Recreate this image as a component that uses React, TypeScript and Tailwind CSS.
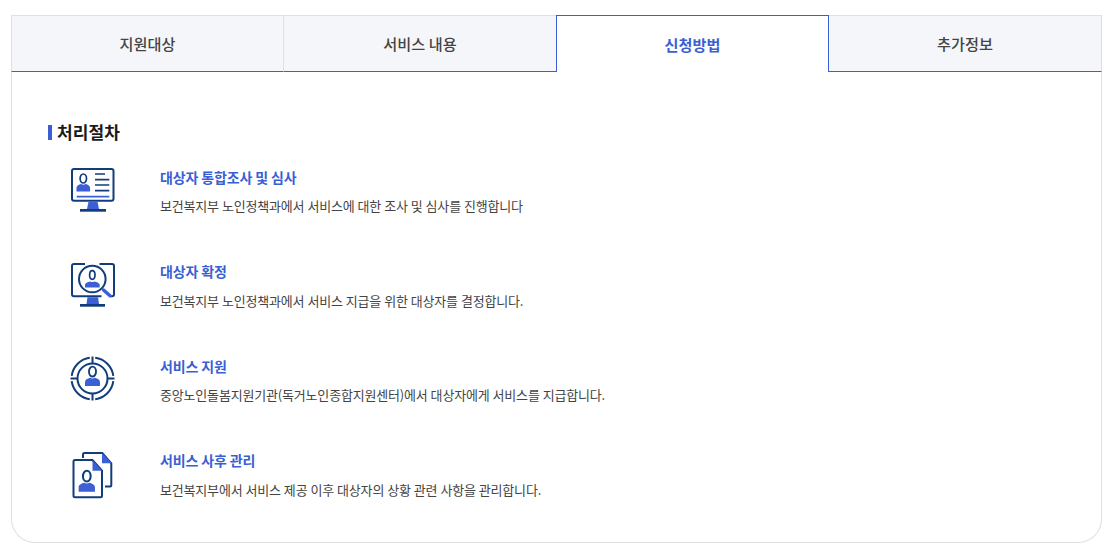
const navy = "#123d7c";
const blue = "#3c5fd6";

function Person({ cx, cy, s = 1 }: { cx: number; cy: number; s?: number }) {
  return (
    <g transform={`translate(${cx} ${cy}) scale(${s})`}>
      <ellipse cx="0" cy="-4" rx="3.2" ry="4.5" fill="none" stroke={navy} strokeWidth="1.7" />
      <path d="M-6.8 9V5.500c0-2.200 2-3.300 4.600-4 1.300.9 3.100.9 4.400 0 2.600.7 4.600 1.800 4.600 4V9z" fill={blue} />
    </g>
  );
}

function Monitor() {
  return (
    <svg width="46" height="48" viewBox="0 0 46 48" fill="none">
      <rect x="2" y="2" width="41.500" height="31.700" rx="2" stroke={navy} strokeWidth="2" />
      <Person cx={13.3} cy={15.5} />
      <path d="M25 7h10M25 12.700h14.300M25 18h14.300M25 23.700h14.300" stroke={navy} strokeWidth="1.700" />
      <path d="M6.700 29.700h32.600" stroke={blue} strokeWidth="1.800" />
      <path d="M18.500 34.700h9l1.500 7.300h-12z" fill={blue} />
      <path d="M10 42h26v2.700H10z" fill={navy} />
    </svg>
  );
}

function SearchMonitor() {
  return (
    <svg width="46" height="48" viewBox="0 0 46 48" fill="none">
      <path d="M15 2H4a2 2 0 0 0-2 2v28.300a2 2 0 0 0 2 2h27.500M29.500 2H42a2 2 0 0 1 2 2v28.300a2 2 0 0 1-2 2h-2" stroke={navy} strokeWidth="2" />
      <circle cx="22.300" cy="17" r="13.300" fill="#fff" stroke={navy} strokeWidth="2" />
      <ellipse cx="22.300" cy="13" rx="2.700" ry="4.300" stroke={navy} strokeWidth="1.700" />
      <path d="M15 25.500v-2.500c0-1.900 2.800-3 5.300-3.500 1.200.8 2.800.8 4 0 2.500.5 5.400 1.600 5.400 3.500v2.500z" fill={blue} />
      <path d="M33.500 28l6.500 5.700" stroke={blue} strokeWidth="3.500" strokeLinecap="round" />
      <path d="M17.500 35.300h10.500l1 6.700H16.500z" fill={blue} />
      <path d="M10 42h25v2.700H10z" fill={navy} />
    </svg>
  );
}

function Target() {
  return (
    <svg width="46" height="48" viewBox="0 0 46 48" fill="none">
      <circle cx="22.500" cy="22.500" r="15" stroke={navy} strokeWidth="2" />
      <path d="M19.800 1.700A21 21 0 0 0 1.700 19.800M25.200 1.700A21 21 0 0 1 43.300 19.800M19.800 43.300A21 21 0 0 1 1.700 25.200M25.200 43.300A21 21 0 0 0 43.300 25.200" stroke={navy} strokeWidth="2" />
      <path d="M22.500 .5v7M22.500 37.500v7M.5 22.500h7M37.500 22.500h7" stroke={navy} strokeWidth="2" />
      <Person cx={22.5} cy={20} s={1.1} />
    </svg>
  );
}

function Docs() {
  return (
    <svg width="46" height="48" viewBox="0 0 46 48" fill="none">
      <path d="M13 7V3.500A1.500 1.500 0 0 1 14.500 2H32.300l9 10.300V34.500a1 1 0 0 1-1 1H35" stroke={navy} strokeWidth="2" />
      <path d="M32 2l10 10.300H32z" fill={blue} />
      <path d="M5 9H22.500l9.500 10.700V44.800a1.500 1.500 0 0 1-1.500 1.500H5a1.500 1.500 0 0 1-1.500-1.500V10.500A1.500 1.500 0 0 1 5 9z" fill="#fff" stroke={navy} strokeWidth="2" />
      <path d="M22.500 9l9.800 10.700h-9.800z" fill={blue} />
      <Person cx={16.8} cy={30} s={1.2} />
    </svg>
  );
}

const tabs = [
  { label: "지원대상", width: "w-[273px]" },
  { label: "서비스 내용", width: "w-[272px]" },
  { label: "신청방법", width: "w-[273px]" },
  { label: "추가정보", width: "w-[273px]" },
];

const steps = [
  { icon: <Monitor />, title: "대상자 통합조사 및 심사", desc: "보건복지부 노인정책과에서 서비스에 대한 조사 및 심사를 진행합니다" },
  { icon: <SearchMonitor />, title: "대상자 확정", desc: "보건복지부 노인정책과에서 서비스 지급을 위한 대상자를 결정합니다." },
  { icon: <Target />, title: "서비스 지원", desc: "중앙노인돌봄지원기관(독거노인종합지원센터)에서 대상자에게 서비스를 지급합니다." },
  { icon: <Docs />, title: "서비스 사후 관리", desc: "보건복지부에서 서비스 제공 이후 대상자의 상황 관련 사항을 관리합니다." },
];

export default function App() {
  return (
    <div className="w-[1113px] h-[552px] bg-white pt-[15px] px-[11px] font-['Noto_Sans_CJK_KR','Noto_Sans',sans-serif]">
      <div className="w-[1091px] h-[528px] border border-[#e0e0e0] rounded-b-[24px] border-t-0">
        {/* tabs */}
        <div className="flex h-[57px] -mx-px">
          {tabs.map((t, i) =>
            i === 2 ? (
              <div key={t.label} className={`${t.width} flex items-center justify-center bg-white border border-b-0 border-[#3a5fd4] text-[15.2px] font-bold text-[#3a5fd4]`}>
                {t.label}
              </div>
            ) : (
              <div
                key={t.label}
                className={`${t.width} flex items-center justify-center bg-[#f5f6fa] border-t border-b border-t-[#e0e0e0] border-b-[#3a5fd4] text-[15.2px] font-medium text-[#444] ${i === 0 ? "border-l border-l-[#e0e0e0] border-r border-r-[#e0e0e0]" : ""} ${i === 3 ? "border-r border-r-[#e0e0e0]" : ""}`}
              >
                {t.label}
              </div>
            )
          )}
        </div>

        {/* content */}
        <div className="pl-9 pt-[48px]">
          <h3 className="flex items-center gap-[5px] text-[17px] tracking-[0.15px] leading-[24px] font-bold text-[#1a1a1a]">
            <span className="w-1 h-[15px] bg-[#3a5fd4]" />
            처리절차
          </h3>
          <ul className="mt-[13px] flex flex-col">
            {steps.map((s) => (
              <li key={s.title} className="flex h-[94.5px]">
                <div className="w-[112px] pl-[22px] pt-[10px]">{s.icon}</div>
                <div className="pt-[7.7px]">
                  <p className="text-[14px] tracking-[-0.15px] leading-[24px] font-bold text-[#3a5fd4]">{s.title}</p>
                  <p className="mt-[5.4px] text-[13px] tracking-[-0.18px] [word-spacing:0.3px] leading-[24px] text-[#444]">{s.desc}</p>
                </div>
              </li>
            ))}
          </ul>
        </div>
      </div>
    </div>
  );
}
